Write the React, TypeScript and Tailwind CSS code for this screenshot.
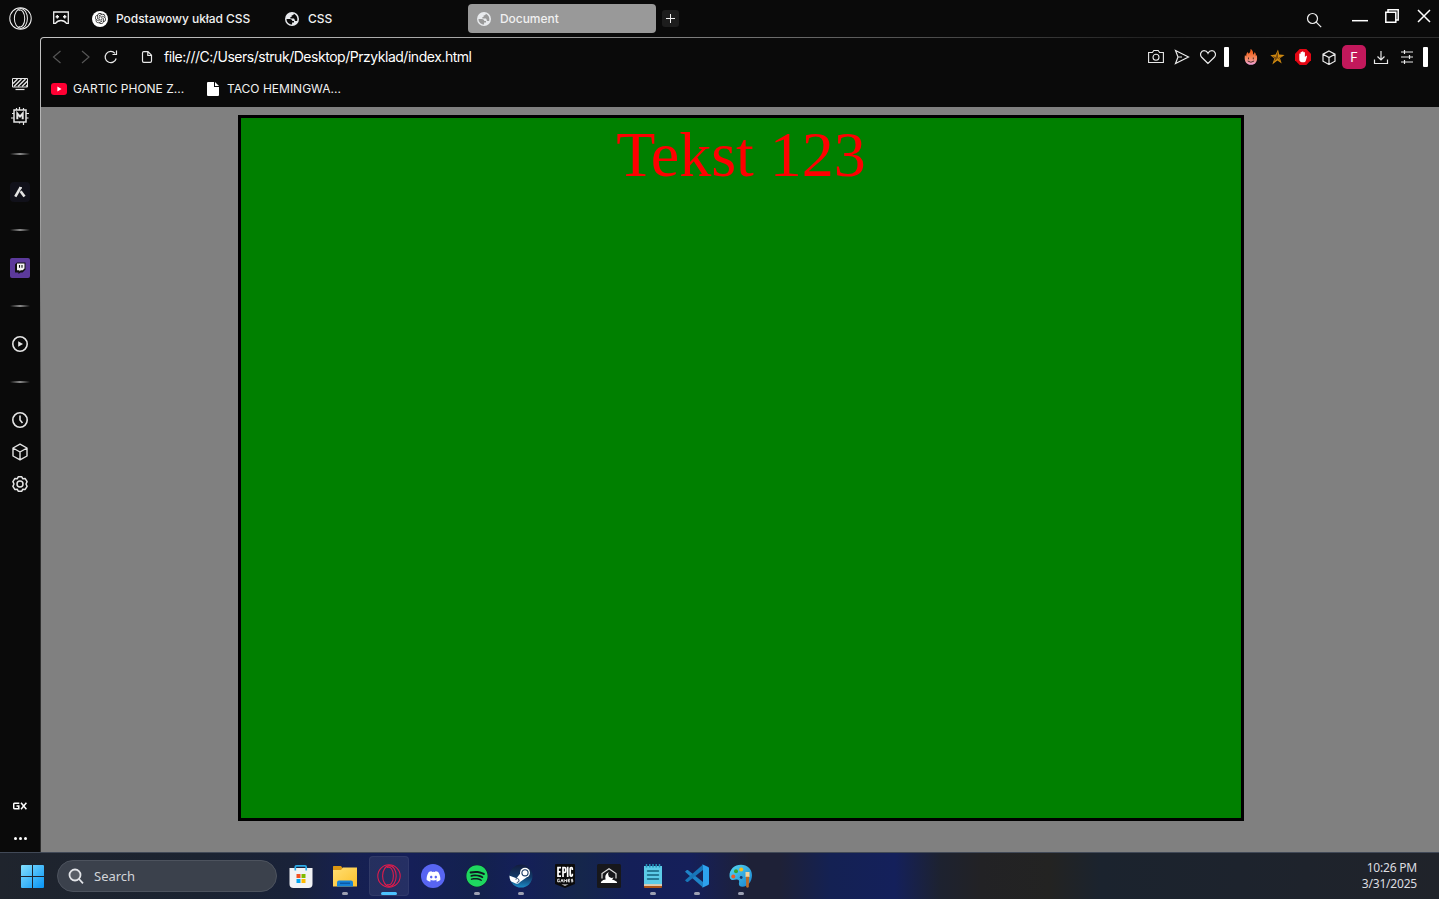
import type { ReactNode } from 'react';
import { FaDiscord, FaSpotify } from 'react-icons/fa';
import { SiOpenai } from 'react-icons/si';

type IconProps = { className?: string };

function OperaLogo({ className = '' }: IconProps) {
  return (
    <svg viewBox="0 0 24 24" className={className} fill="none" stroke="currentColor" strokeWidth="1.05">
      <circle cx="12" cy="12" r="11.2" />
      <ellipse cx="12.4" cy="12" rx="6.800" ry="10.400" />
      <path d="M10 3.600c3.400-1.800 6.400 2.200 6.400 8.400s-3 10.200-6.400 8.400" />
    </svg>
  );
}

function GlobeIcon({ className = '' }: IconProps) {
  return (
    <svg viewBox="0 0 14 14" className={className}>
      <circle cx="7" cy="7" r="7" fill="#e8eaed" />
      <path d="M1.500 6.900h3.300c1.800 0 2.500 1 2.500 2.200H9v1.300H7.100v2C3.900 12.400 1.500 9.900 1.500 6.900Z" fill="currentColor" />
      <path d="M8.800 1.800c-.1 1.200-.7 1.700-2.200 1.700v1.400H5.400v1.500h2.900c1 0 1.400.7 1.400 1.500 0 .7.500 1.200 1.200 1.200h1.200C13.100 6 11.500 2.800 8.800 1.800Z" fill="currentColor" />
    </svg>
  );
}

function Line({ children, size = 16, className = '', width = 1 }: { children: ReactNode; size?: number; className?: string; width?: number }) {
  return (
    <svg width={size} height={size} viewBox={`0 0 ${size} ${size}`} fill="none" stroke="currentColor" strokeWidth={width} className={`shrink-0 ${className}`}>
      {children}
    </svg>
  );
}

function SideCell({ children }: { children: ReactNode }) {
  return <div className="flex h-8 w-10 shrink-0 items-center justify-center text-[#e4e4e4]">{children}</div>;
}

function SideDivider() {
  return (
    <div className="flex h-11 w-10 shrink-0 items-center justify-center">
      <div className="h-[2px] w-5 bg-linear-to-r from-transparent via-[#8c8c8c] to-transparent" />
    </div>
  );
}

function ToolCell({ children }: { children: ReactNode }) {
  return <div className="flex h-6 w-[26px] shrink-0 items-center justify-center text-[#e8e8e8]">{children}</div>;
}

function Sidebar() {
  return (
    <aside className="flex w-10 shrink-0 flex-col pt-[31px]">
      <SideCell>
        <Line>
          <path d="M.5 2.500h15v8.500h-15z" />
          <path d="M1 7.500 5.500 3M2 10.500 9.500 3M6 10.500 13.500 3M10 10.500 15.500 5M14 10.500l1.500-1.500" strokeWidth="1.400" />
          <path d="M3.500 13.500h9" strokeWidth="1.200" />
        </Line>
      </SideCell>
      <SideCell>
        <Line size={18} width={1.500}>
          <path d="M3 3h12v12H3z" />
          <path d="M5.500 1v2M8.500 0v3M12.500 1v2M8.500 15v1.500M12.500 15v3M1 6.500h2M0 11h3M15 6.500h3M15 11h2.500" strokeWidth="1.200" />
          <path d="M6.300 12.200V6.500L9 9.600l2.700-3.100v5.700" strokeWidth="2" />
        </Line>
      </SideCell>
      <SideDivider />
      <SideCell>
        <div className="flex size-5 items-center justify-center rounded-sm bg-[#11111a]">
          <Line size={12} width={2.600}>
            <path d="M6.800 1.200 1.300 10.600" />
            <path d="M6.600 5.200 10.500 10.600" />
            <path d="M5.600 1.800h2.200" strokeWidth="1.600" />
          </Line>
        </div>
      </SideCell>
      <SideDivider />
      <SideCell>
        <svg width="20" height="20" viewBox="0 0 20 20">
          <rect width="20" height="20" rx="2" fill="#5c3a9b" />
          <path d="M5 6.500 7 4.500h8.500v7l-3 3h-2L8.500 16v-1.500H5Z" fill="#101010" />
          <path d="M7 5.500h7.500v5L12.700 12.300h-2L9.500 13.500v-1.200H7Z" fill="#f4f4f4" />
          <path d="M9.500 7v2.800M12 7v2.800" stroke="#101010" strokeWidth="1.100" />
        </svg>
      </SideCell>
      <SideDivider />
      <SideCell>
        <Line width={1.600}>
          <circle cx="8" cy="8" r="7.200" />
          <path d="M6.200 5.200v5.600L11 8Z" fill="currentColor" stroke="none" />
        </Line>
      </SideCell>
      <SideDivider />
      <SideCell>
        <Line width={1.600}>
          <circle cx="8" cy="8" r="7.200" />
          <path d="M8 3.500V8l2.500 3" />
        </Line>
      </SideCell>
      <SideCell>
        <Line size={18} width={1.400}>
          <path d="m9 1.200 7 3.800v8L9 16.800 2 13V5Z M2 5l7 4 7-4M9 9v7.500" strokeLinejoin="round" />
        </Line>
      </SideCell>
      <SideCell>
        <Line width={1.500}>
          <circle cx="8" cy="8" r="3" />
          <path d="M6.200.800h3.600l1 2 2.400-.2 1.900 3L14 8l1.100 2.400-1.900 3-2.400-.2-1 2H6.200l-1-2-2.400.2-1.900-3L2 8 .900 5.600l1.900-3 2.400.2Z" strokeLinejoin="round" />
        </Line>
      </SideCell>
      <div className="flex-1" />
      <div className="flex h-8 w-10 items-center justify-center pt-px text-white">
        <svg width="14" height="8" viewBox="0 0 14 8" fill="none" stroke="currentColor" strokeWidth="1.500">
          <path d="M6.300 1.200H1.700q-1 0-1 1v3.500q0 1 1 1h4.100V4H3.500M8 .7l5.400 6.500M13.400.7 8 7.200" />
        </svg>
      </div>
      <div className="flex h-[31px] w-10 items-center justify-center gap-[2px] pt-[3px]">
        <div className="size-[3px] rounded-full bg-white" />
        <div className="size-[3px] rounded-full bg-white" />
        <div className="size-[3px] rounded-full bg-white" />
      </div>
    </aside>
  );
}

function TabBar() {
  return (
    <header className="flex h-[37px] shrink-0 items-start text-xs font-medium tracking-[-0.05px] text-[#f0f0f0]">
      <div className="flex h-9 w-10 items-center justify-center">
        <OperaLogo className="size-[23px]" />
      </div>
      <div className="flex h-9 w-[42px] items-center justify-center">
        <Line width={1.300}>
          <path d="M.700 2h14.600v11.300h-1.800q-2-2.800-5.500-2.800t-5.500 2.800H.700Z" />
          <path d="M4.300 5v3.400M2.600 6.700H6M11.700 5v3.400M10 6.700h3.400" strokeWidth="1.500" />
        </Line>
      </div>
      <div className="flex h-[37px] w-[193px] items-center pl-[10px]">
        <div className="flex size-4 items-center justify-center rounded-full bg-white text-[#222]">
          <SiOpenai size={11} />
        </div>
        <span className="ml-2 whitespace-nowrap">Podstawowy układ CSS</span>
      </div>
      <div className="flex h-[37px] w-[193px] items-center pl-[10px] text-[#f0f0f0]">
        <GlobeIcon className="size-[14px] text-[#0a0a0a]" />
        <span className="ml-[9px]">CSS</span>
      </div>
      <div className="mt-1 flex h-[29px] w-[188px] items-center rounded-sm bg-[#999] pl-[9px]">
        <GlobeIcon className="size-[14px] text-[#999]" />
        <span className="ml-[9px]">Document</span>
      </div>
      <div className="mt-[10px] ml-[6px] flex size-[17px] items-center justify-center rounded-[3px] bg-[#1d1d1d]">
        <Line size={9}>
          <path d="M4.500 0v9M0 4.500h9" />
        </Line>
      </div>
      <div className="flex-1" />
      <Line width={1.200} className="mt-3 mr-[30px]">
        <circle cx="6.500" cy="6.500" r="5" />
        <path d="m10.200 10.200 5 5" />
      </Line>
      <Line size={16} width={1.500} className="mt-3 text-white">
        <path d="M0 8.700h16" />
      </Line>
      <Line size={14} width={1.500} className="mt-[9px] ml-[17px] text-white">
        <path d="M.800 3.300h10v10h-10zM3 3V.800h10.200V11H11" />
      </Line>
      <Line size={14} width={1.500} className="mt-[9px] mr-2 ml-[18px] text-white">
        <path d="m1 1 12 12M13 1 1 13" />
      </Line>
    </header>
  );
}

function Toolbar() {
  return (
    <div className="flex h-[38px] shrink-0 items-center">
      <Line size={14} width={1.200} className="ml-[9px] text-[#555]">
        <path d="M10.500 1 3.500 7l7 6" />
      </Line>
      <Line size={14} width={1.200} className="ml-[15px] text-[#555]">
        <path d="m3 1 7 6-7 6" />
      </Line>
      <Line size={14} width={1.200} className="ml-[11px] text-[#e8e8e8]">
        <path d="M12.200 8.500A5.600 5.600 0 1 1 11 3.300M12.500.500v4h-4" />
      </Line>
      <Line size={12} width={1.200} className="ml-[23px] text-[#e8e8e8]">
        <path d="M1.500 2q0-1.300 1.300-1.300H7l3.500 3.600v5.700q0 1.300-1.300 1.300H2.800Q1.500 11.300 1.500 10ZM6.800.900v3.600h3.500" />
      </Line>
      <span className="ml-[11px] text-sm tracking-[-0.47px] whitespace-nowrap text-white">file:///C:/Users/struk/Desktop/Przyklad/index.html</span>
      <div className="flex-1" />
      <ToolCell>
        <Line width={1.100}>
          <path d="M.600 3.500h3.800l1.400-2h4.400l1.400 2h3.800v10H.600Z" />
          <circle cx="8" cy="8.300" r="3" />
        </Line>
      </ToolCell>
      <ToolCell>
        <Line width={1.200}>
          <path d="m1.500 1.500 13 6.500-13 6.500L4 8ZM4 8h4" />
        </Line>
      </ToolCell>
      <ToolCell>
        <Line width={1.200}>
          <path d="M8 14.500 1.700 8.300C-.700 5.500 1 1.700 4 1.700c2 0 3.300 1.200 4 2.600.7-1.400 2-2.600 4-2.600 3 0 4.700 3.800 2.300 6.600Z" />
        </Line>
      </ToolCell>
      <div className="mr-[9px] ml-[3px] h-5 w-[5px] rounded-[1px] bg-white" />
      <ToolCell>
        <svg width="14" height="16" viewBox="0 0 14 16">
          <defs>
            <linearGradient id="flame" x2="0" y2="1">
              <stop offset=".2" stopColor="#f26322" />
              <stop offset=".6" stopColor="#f58a63" />
              <stop offset="1" stopColor="#eea0dc" />
            </linearGradient>
          </defs>
          <path d="M6.500 0c2.600 1.200 2.800 3.800 2.500 5.500 1-.3 1.500-1.200 1.500-2.500 1.300 1 1.500 2.600 1.300 4 .5-.2.8-.7.900-1.200 1.200 5-.2 10-5.700 10S-.100 11 1 5.800c.3.900.7 1.300 1.300 1.500C2 5 3 3.800 4 3c0 .8.200 1.400.6 1.800C5.800 4 6.800 2.200 6.500 0Z" fill="url(#flame)" />
          <path d="M4.500 8.500v1.800M9.300 8.500v1.800M3.700 12q3.200 2.500 6.400 0" stroke="#50302b" strokeWidth="1" fill="none" />
        </svg>
      </ToolCell>
      <ToolCell>
        <svg width="15" height="16" viewBox="0 0 15 16">
          <path d="m8 .5 1.200 5 5.400.500-4.600 3.200 1.700 5.200-4.300-3-5.100 4 2-6L.300 6.200l5.300-.700Z" fill="#d08a10" />
          <path d="M8 2v7l-4 3.500ZM8 9l5-2.300L9 9.500l2 3.800ZM2 6.700 8 9l-3.500.500Z" fill="#7a4b0e" />
        </svg>
      </ToolCell>
      <ToolCell>
        <svg width="16" height="16" viewBox="0 0 16 16">
          <path d="M4.700 0h6.600L16 4.700v6.600L11.300 16H4.700L0 11.300V4.700Z" fill="#e30613" />
          <path d="M4.300 7.600V4.800q.7-.8 1.300 0V3.300q.7-.9 1.400 0v-.6q.8-.9 1.500 0v.7q.7-.8 1.400 0V8l1.300-1.200q.9-.2.800.7L10.700 12q-.5 1.300-1.700 1.300H7q-2.700-.3-2.700-3Z" fill="#fff" />
        </svg>
      </ToolCell>
      <ToolCell>
        <Line width={1.200}>
          <path d="M8 1.500 14 4.700v7L8 15l-6-3.300v-7ZM2 4.700 8 8l6-3.300M8 8v7" className="translate-y-[0.5px]" />
        </Line>
      </ToolCell>
      <div className="mr-[2px] flex size-6 shrink-0 items-center justify-center rounded-[5px] bg-[#c2185b] pt-px text-[13px] text-white">F</div>
      <ToolCell>
        <Line width={1.200}>
          <path d="M8 2v9M4.500 7.500 8 11l3.500-3.500M1.500 10.500v4h13v-4" />
        </Line>
      </ToolCell>
      <ToolCell>
        <Line width={1.200}>
          <path d="M2 3.500h12M2 8.500h12M2 13.500h12M5.500 1.500v4M10.500 6.500v4M5.500 11.500v4" transform="translate(0 -.5)" />
        </Line>
      </ToolCell>
      <div className="mr-[11px] ml-[3px] h-5 w-[5px] rounded-[1px] bg-white" />
    </div>
  );
}

function Bookmarks() {
  return (
    <div className="flex h-[31px] shrink-0 items-start pt-[5px] text-xs text-[#f0f0f0]">
      <div className="flex h-4 w-[156px] items-center pl-[10px]">
        <svg width="16" height="12" viewBox="0 0 16 12">
          <rect width="16" height="12" rx="3" fill="#ff0033" />
          <path d="M6.400 3.600v4.800L10.500 6Z" fill="#fff" />
        </svg>
        <span className="ml-[6px] whitespace-nowrap">GARTIC PHONE Z...</span>
      </div>
      <div className="flex h-4 items-center pl-[10px]">
        <svg width="12" height="14" viewBox="0 0 12 14" fill="#fff">
          <path d="M1 0h6v5h5v8q0 1-1 1H1q-1 0-1-1V1q0-1 1-1ZM8 0l4 4H8Z" />
        </svg>
        <span className="ml-2 whitespace-nowrap">TACO HEMINGWA...</span>
      </div>
    </div>
  );
}

function StoreIcon() {
  return (
    <svg width="24" height="24" viewBox="0 0 24 24">
      <path d="M.500 4h23v16q0 4-4 4h-15q-4 0-4-4Z" fill="#f1f2f5" />
      <path d="M6.300 6.500V3Q6.300 1.800 7.500 1.800h8.500q1.200 0 1.200 1.200v3.500" fill="none" stroke="#2dabe8" strokeWidth="1.700" />
      <path d="M7.500 10h4v4h-4z" fill="#f25022" />
      <path d="M12.500 10h4v4h-4z" fill="#7fba00" />
      <path d="M7.500 15h4v4h-4z" fill="#00a4ef" />
      <path d="M12.500 15h4v4h-4z" fill="#ffb900" />
    </svg>
  );
}

function FolderIcon() {
  return (
    <svg width="24" height="24" viewBox="0 0 24 24">
      <defs>
        <linearGradient id="folder" x2="1" y2="1">
          <stop stopColor="#ffde73" />
          <stop offset="1" stopColor="#fdc12b" />
        </linearGradient>
      </defs>
      <path d="M0 2.500q0-.5.500-.5H8l2 2.500L8 7H0Z" fill="#dc9612" />
      <path d="M0 6h8l2-2.500h14v19H0Z" fill="url(#folder)" />
      <path d="M4 22.500V18.500q0-2 2-2h12q2 0 2 2v4Z" fill="#1683d8" />
      <path d="M7 19.300h10" stroke="#0c59a4" strokeWidth="1.500" />
    </svg>
  );
}

function SteamIcon() {
  return (
    <svg width="24" height="24" viewBox="0 0 24 24">
      <defs>
        <linearGradient id="steam" x2="0" y2="1">
          <stop stopColor="#131c3e" />
          <stop offset=".55" stopColor="#123a68" />
          <stop offset="1" stopColor="#1b8ac6" />
        </linearGradient>
        <clipPath id="steam-disc">
          <circle cx="12" cy="12" r="11.500" />
        </clipPath>
      </defs>
      <circle cx="12" cy="12" r="11.500" fill="url(#steam)" />
      <g clipPath="url(#steam-disc)">
        <path d="M0 11.500 7.500 14.200 12 8.500l5.500 5-6.500 4.500q-1.500 2.500-4.300 1.500L0 16.500Z" fill="#fff" />
        <circle cx="16" cy="8.800" r="5" fill="#fff" />
      </g>
      <circle cx="16" cy="8.800" r="3.100" fill="none" stroke="#173862" strokeWidth="1.100" />
      <path d="M6.500 15.200q2.500-1.700 3.500.500t-2.300 3" fill="none" stroke="#173862" strokeWidth=".9" />
    </svg>
  );
}

function EpicIcon() {
  return (
    <svg width="22" height="24" viewBox="0 0 22 24">
      <path d="M2 0h18q1 0 1 1v19l-10 4-10-4V1q0-1 1-1Z" fill="#0b0b0c" />
      <g fill="none" stroke="#fff" strokeWidth="1.700">
        <path d="M7 3.600H4v8.600h3M4 7.800h2.500M9 13V3.600h1.500q1.200 0 1.200 1.200v2.400q0 1.200-1.200 1.200H9M13.700 2.800V13M18.300 6V4.500q0-.9-.8-.9h-.4q-.9 0-.9.900v6.800q0 .9.900.9h.4q.8 0 .8-.9V9.800" />
        <path d="M5.600 15.200H3.700v2.600h1.800v-1.200M6.700 18.300l1.300-3 1.200 3M10.200 18.300v-2.800l1.200 1.300 1.200-1.300v2.800M16 15.300h-1.900v2.500H16M14.100 16.500h1.500M19 15.300h-1.600v1.200h1.400v1.300h-1.700" strokeWidth=".9" />
      </g>
      <path d="M7.500 20.500h7L11 21.800Z" fill="#fff" />
    </svg>
  );
}

function EmulatorIcon() {
  return (
    <svg width="24" height="24" viewBox="0 0 24 24">
      <rect width="24" height="24" rx="1.500" fill="#17171b" />
      <path d="M5 14.500V9.500L12 4.800l7 4.700v5" fill="none" stroke="#ddd" strokeWidth="1.200" />
      <path d="M11.700 8q-1.700 2.500.2 4.800 2 1.800 4.600.8-.5 1-1.500 1.800 2.200.1 4.800 2.300l.4 1.300H3.800l.3-1.300q2-2 4.500-2.100-1.500-5.100 3.100-7.600Z" fill="#fff" />
    </svg>
  );
}

function NotepadIcon() {
  return (
    <svg width="20" height="24" viewBox="0 0 20 24">
      <path d="M1 2h18v19H1z" fill="#5ccbe8" />
      <path d="M1 20.500h18V23q0 1-1 1H2q-1 0-1-1Z" fill="#ad5517" />
      <path d="M1 20.300h18v1.500H1z" fill="#f1e6d2" />
      <path d="M3.500 0v3.500M6.800 0v3.500M10 0v3.500M13.200 0v3.500M16.500 0v3.500" stroke="#2293b8" strokeWidth="1.500" />
      <path d="M4.500 7h11M4.500 11h11M4.500 15h11" stroke="#15627c" strokeWidth="1.400" strokeLinecap="round" />
    </svg>
  );
}

function CodeIcon() {
  return (
    <svg width="24" height="24" viewBox="0 0 24 24">
      <path d="M0 7.700 1.800 6.100q.5-.3 1 0L18 18v5.600Z" fill="#1f84c8" />
      <path d="m0 16.300 1.800 1.600q.5.300 1 0L18 6V.400Z" fill="#1776b9" />
      <path d="m17.300.200 5.900 2.700q.8.500.8 1.300v15.600q0 .8-.8 1.300l-5.900 2.700q.7-.8.700-2V2.200q0-1.200-.7-2Z" fill="#2da2ef" />
    </svg>
  );
}

function PaintIcon() {
  return (
    <svg width="24" height="24" viewBox="0 0 24 24">
      <defs>
        <linearGradient id="palette" x2="1" y2="1">
          <stop stopColor="#56d8f2" />
          <stop offset="1" stopColor="#1781ce" />
        </linearGradient>
      </defs>
      <path d="M12 .8C18.500.800 23 5.200 23 11.300c0 6.500-4.500 11.500-9.500 11.500-3 0-4-2-3.500-4 .6-2.500-.7-3.600-2.700-3.200-2.600.6-5.800 1.300-6.500-1.800C-.800 7 4.500.800 12 .800Z" fill="url(#palette)" />
      <circle cx="7" cy="7.200" r="2" fill="#38a52c" />
      <circle cx="12.200" cy="5.500" r="2" fill="#f7bd19" />
      <circle cx="4.300" cy="12.500" r="2" fill="#ee5a28" />
      <circle cx="12.200" cy="13.500" r="1.400" fill="#183a6c" />
      <path d="M16.500 8h4v5h-4z" fill="#f6d39b" />
      <path d="M17 12.700h3l-.2 10.300q-1.300 1.500-2.600 0Z" fill="#bd6b25" />
    </svg>
  );
}

type AppState = 'idle' | 'running' | 'active';

function TaskApp({ children, state = 'idle' }: { children: ReactNode; state?: AppState }) {
  return (
    <div className="flex h-[46px] w-11 shrink-0 justify-center pt-[3px]">
      <div className={`flex h-10 w-10 flex-col items-center rounded-sm ${state === 'active' ? 'bg-white/[7%] ring-1 ring-white/5 ring-inset' : ''}`}>
        <div className="mt-2 flex h-6 items-center">{children}</div>
        {state === 'running' && <div className="mt-1 h-[3px] w-[6px] shrink-0 rounded-full bg-[#9da0b2]" />}
        {state === 'active' && <div className="mt-1 h-[3px] w-4 shrink-0 rounded-full bg-[#4cc2ff]" />}
      </div>
    </div>
  );
}

function Taskbar() {
  return (
    <footer className="flex h-[47px] shrink-0 items-start border-t border-[#414957] bg-[linear-gradient(90deg,#1f242d_0px,#1b2331_200px,#192239_290px,#162050_350px,#151f58_410px,#13214d_480px,#141f59_520px,#15264b_580px,#141f58_630px,#151f5a_690px,#1e2137_750px,#1e2137_780px,#142153_830px,#14205b_895px,#1d2230_940px,#222225_980px,#232322_1050px,#1b232e_1100px,#1d232d_1240px,#20232a_1439px)]">
      <svg width="23" height="23" viewBox="0 0 23 23" className="mt-3 ml-[21px]">
        <defs>
          <linearGradient id="windows" x2="1" y2="1">
            <stop stopColor="#83e0ff" />
            <stop offset="1" stopColor="#0794f5" />
          </linearGradient>
        </defs>
        <path d="M1 0h10v11H0V1q0-1 1-1ZM12 0h10q1 0 1 1v10H12ZM0 12h11v11H1q-1 0-1-1ZM12 12h11v10q0 1-1 1H12Z" fill="url(#windows)" />
      </svg>
      <div className="mt-[7px] ml-[13px] flex h-8 w-[220px] items-center rounded-full border border-[#4d535e] bg-[#3b414c]">
        <Line width={1.800} className="ml-[10px] text-[#e2e4e8]">
          <circle cx="7" cy="7" r="5.500" className="fill-white/15" />
          <path d="m11 11 4 4.300" />
        </Line>
        <span className="mt-[2px] ml-[10px] font-['Noto_Sans',sans-serif] text-[13px] text-[#d2d4d8]">Search</span>
      </div>
      <nav className="ml-[2px] flex">
        <TaskApp><StoreIcon /></TaskApp>
        <TaskApp state="running"><FolderIcon /></TaskApp>
        <TaskApp state="active"><OperaLogo className="size-6 text-[#e01b4c]" /></TaskApp>
        <TaskApp>
          <div className="flex size-6 items-center justify-center rounded-full bg-[#5865f2] text-white"><FaDiscord size={15} /></div>
        </TaskApp>
        <TaskApp state="running">
          <div className="flex size-[22px] items-center justify-center rounded-full bg-[#101820] text-[#1ed760]"><FaSpotify size={22} /></div>
        </TaskApp>
        <TaskApp state="running"><SteamIcon /></TaskApp>
        <TaskApp><EpicIcon /></TaskApp>
        <TaskApp><EmulatorIcon /></TaskApp>
        <TaskApp state="running"><NotepadIcon /></TaskApp>
        <TaskApp state="running"><CodeIcon /></TaskApp>
        <TaskApp state="running"><PaintIcon /></TaskApp>
      </nav>
      <div className="mt-[7px] mr-[22px] ml-auto text-right font-['Noto_Sans',sans-serif] text-[12px] leading-4 tracking-[-0.2px] text-[#dcdde0]">
        <div>10:26 PM</div>
        <div>3/31/2025</div>
      </div>
    </footer>
  );
}

export default function App() {
  return (
    <div className="flex h-[899px] w-[1439px] flex-col overflow-hidden bg-[#0a0a0a] font-['Inter',sans-serif]">
      <TabBar />
      <div className="flex min-h-0 flex-1">
        <Sidebar />
        <div className="flex min-w-0 flex-1 flex-col rounded-tl-[4px] bg-[radial-gradient(ellipse_1300px_500px_at_0_0,#c4c4c4,#a4a4a4_35%,#222_85%,#2e2e2e)] pt-px pl-px">
          <div className="flex flex-1 flex-col overflow-hidden rounded-tl-[3px] bg-[#0a0a0a]">
            <Toolbar />
            <Bookmarks />
            <main className="flex-1 bg-[#808080] pt-2 pl-[197px]">
              <div className="h-[706px] w-[1006px] border-[3px] border-black bg-[#008000] text-center font-['Liberation_Serif',serif] text-[64px] leading-[74px] text-[#ff0000]">Tekst 123</div>
            </main>
          </div>
        </div>
      </div>
      <Taskbar />
    </div>
  );
}
